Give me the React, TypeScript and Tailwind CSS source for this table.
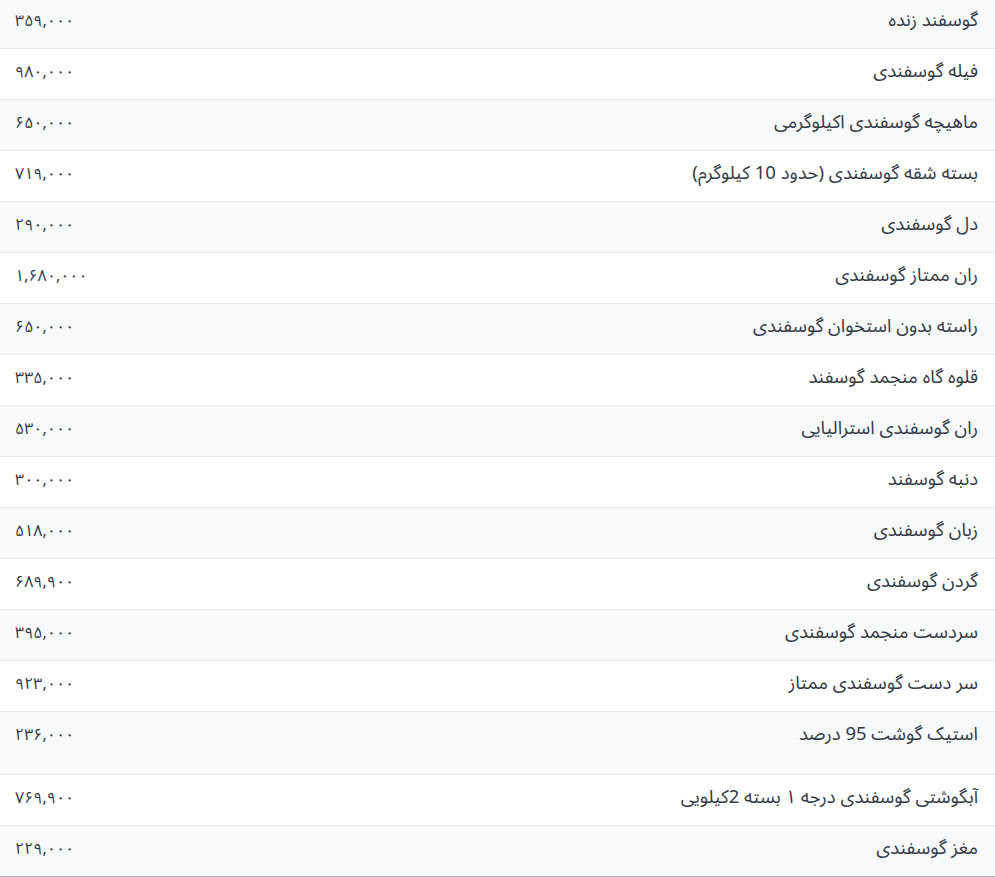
import React from "react";

const rows: { name: string; price: string; tall?: boolean }[] = [
  { name: "گوسفند زنده", price: "۳۵۹,۰۰۰" },
  { name: "فیله گوسفندی", price: "۹۸۰,۰۰۰" },
  { name: "ماهیچه گوسفندی اکیلوگرمی", price: "۶۵۰,۰۰۰" },
  { name: "بسته شقه گوسفندی (حدود 10 کیلوگرم)", price: "۷۱۹,۰۰۰" },
  { name: "دل گوسفندی", price: "۲۹۰,۰۰۰" },
  { name: "ران ممتاز گوسفندی", price: "۱,۶۸۰,۰۰۰" },
  { name: "راسته بدون استخوان گوسفندی", price: "۶۵۰,۰۰۰" },
  { name: "قلوه گاه منجمد گوسفند", price: "۳۳۵,۰۰۰" },
  { name: "ران گوسفندی استرالیایی", price: "۵۳۰,۰۰۰" },
  { name: "دنبه گوسفند", price: "۳۰۰,۰۰۰" },
  { name: "زبان گوسفندی", price: "۵۱۸,۰۰۰" },
  { name: "گردن گوسفندی", price: "۶۸۹,۹۰۰" },
  { name: "سردست منجمد گوسفندی", price: "۳۹۵,۰۰۰" },
  { name: "سر دست گوسفندی ممتاز", price: "۹۲۳,۰۰۰" },
  { name: "استیک گوشت 95 درصد", price: "۲۳۶,۰۰۰", tall: true },
  { name: "آبگوشتی گوسفندی درجه ۱ بسته 2کیلویی", price: "۷۶۹,۹۰۰" },
  { name: "مغز گوسفندی", price: "۲۲۹,۰۰۰" },
];

export default function App() {
  return (
    <div
      className="w-[995px] h-[877px] overflow-hidden bg-white text-[#333a45]"
      style={{ fontFamily: '"Noto Sans Arabic", "DejaVu Sans", sans-serif' }}
    >
      <table dir="rtl" className="w-full border-collapse -mt-[2px]">
        <tbody>
          {rows.map((r, i) => (
            <tr
              key={i}
              className={`${i % 2 === 0 ? "bg-[#f8f9fa]" : "bg-white"} border-b border-[#e9ecef] last:border-[#a9b1c1]`}
            >
              <td className={`text-right align-top text-[18.5px] pr-[17px] pl-[15px] pt-[10px] leading-[26px] ${r.tall ? "pb-[26px]" : "pb-[14px]"}`}>
                {r.name}
              </td>
              <td className="text-left align-top text-[16px] pl-[15px] pr-[15px] pt-[10px] pb-[14px] leading-[26px] w-[180px]">
                {r.price}
              </td>
            </tr>
          ))}
        </tbody>
      </table>
    </div>
  );
}
